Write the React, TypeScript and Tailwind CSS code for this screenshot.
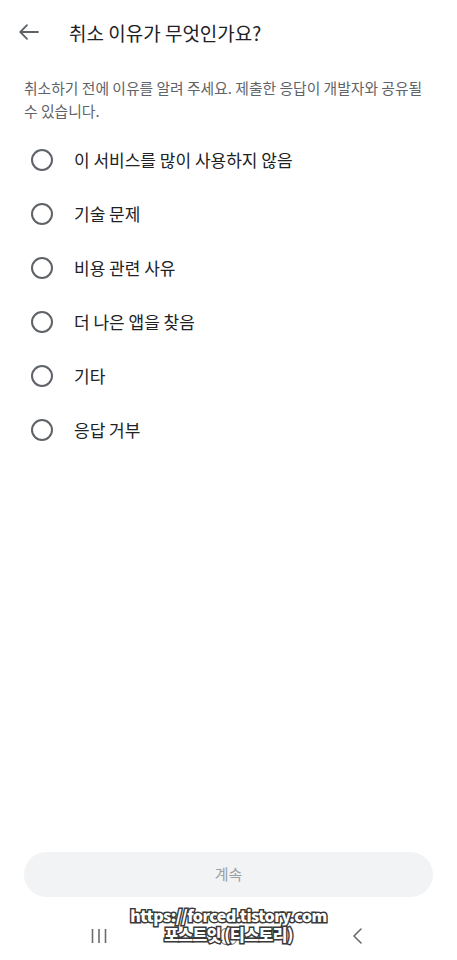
const reasons = [
  '이 서비스를 많이 사용하지 않음',
  '기술 문제',
  '비용 관련 사유',
  '더 나은 앱을 찾음',
  '기타',
  '응답 거부',
];

export default function App() {
  return (
    <div
      className="relative flex h-[960px] w-[457px] flex-col bg-white"
      style={{ fontFamily: '"Noto Sans CJK KR", "Noto Sans", sans-serif' }}
    >
      {/* Header */}
      <div className="flex h-[64px] items-center">
        <svg className="ml-[18px] h-[22px] w-[22px]" viewBox="0 0 22 22" fill="none" stroke="#5f6368" strokeWidth={1.8} strokeLinecap="round" strokeLinejoin="round">
          <path d="M20 11H2.5M9 4.2L2.3 11 9 17.8" />
        </svg>
        <h1 className="ml-[29px] text-[19px] leading-none text-[#202124]">취소 이유가 무엇인가요?</h1>
      </div>

      {/* Description */}
      <p className="px-6 pt-3 text-[14.8px] leading-[23px] text-[#5f6368]">
        취소하기 전에 이유를 알려 주세요. 제출한 응답이 개발자와 공유될
        <br />
        수 있습니다.
      </p>

      {/* Options */}
      <div className="mt-[11px] flex flex-col">
        {reasons.map((r) => (
          <div key={r} className="flex h-[54px] items-center pl-[31px]">
            <span className="h-[22px] w-[22px] rounded-full border-[2.2px] border-[#5f6368]" />
            <span className="ml-[21px] text-[17px] text-[#202124]">{r}</span>
          </div>
        ))}
      </div>

      <div className="flex-1" />

      {/* Continue button */}
      <div className="mx-6 mb-[15px] flex h-[45px] items-center justify-center rounded-full bg-[#f1f3f4]">
        <span className="text-[15px] text-[#9aa0a6]">계속</span>
      </div>

      {/* Navigation bar */}
      <div className="flex h-[48px] items-center justify-between px-[90px]">
        <svg className="h-[18px] w-[18px]" viewBox="0 0 18 18" stroke="#6b6b6b" strokeWidth={1.6}>
          <path d="M2.5 2v14M9 2v14M15.5 2v14" />
        </svg>
        <span className="h-[17px] w-[17px] rounded-[6px] border-[1.6px] border-[#6b6b6b]" />
        <svg className="h-[18px] w-[18px]" viewBox="0 0 18 18" fill="none" stroke="#6b6b6b" strokeWidth={1.6} strokeLinecap="round" strokeLinejoin="round">
          <path d="M12 2L5 9l7 7" />
        </svg>
      </div>

      {/* Watermark */}
      <div
        className="absolute left-0 right-0 top-[906px] flex flex-col items-center text-center font-black leading-[19px] text-white [-webkit-text-stroke:3px_#3a3a3a] [paint-order:stroke_fill]"
        style={{ fontFamily: '"Noto Sans CJK KR", "Noto Sans", sans-serif' }}
      >
        <span className="text-[16px] tracking-[-0.5px]">https://forced.tistory.com</span>
        <span className="text-[16px] tracking-[-0.5px]">포스트잇 (티스토리)</span>
      </div>
    </div>
  );
}
